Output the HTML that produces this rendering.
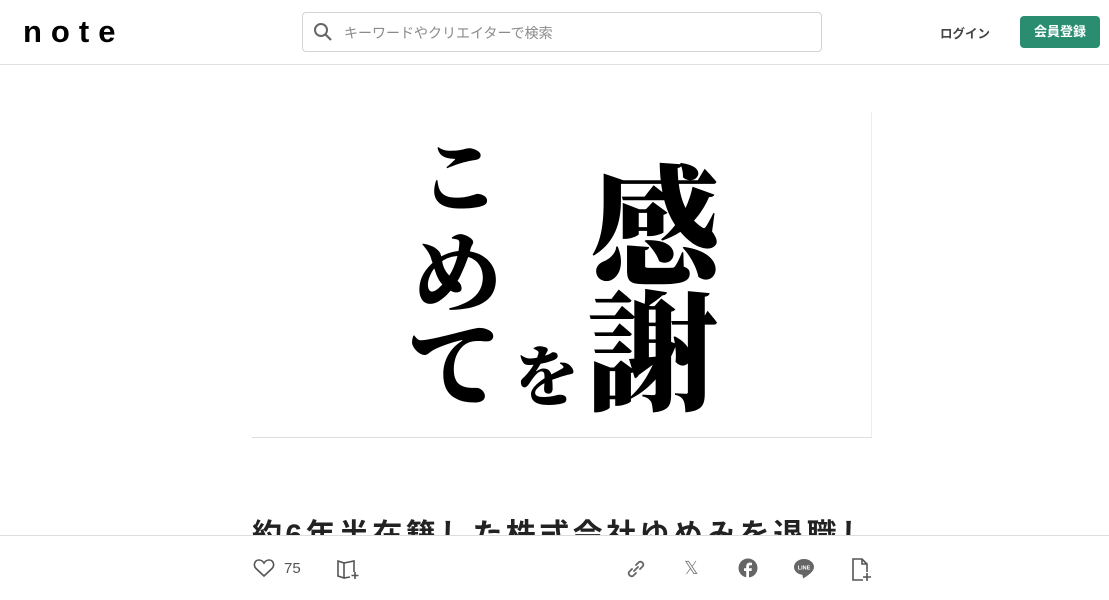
<!DOCTYPE html>
<html><head><meta charset="utf-8"><style>
*{margin:0;padding:0;box-sizing:border-box}
body{width:1109px;height:600px;overflow:hidden;background:#fff;font-family:"Liberation Sans","Noto Sans CJK JP",sans-serif;position:relative}
.hdr{position:absolute;top:0;left:0;width:1109px;height:65px;border-bottom:1px solid #e0e0e0}
.logo{position:absolute;left:23px;top:14px;font-size:31px;font-weight:bold;letter-spacing:9px;color:#000;font-family:"Liberation Sans",sans-serif}
.search{position:absolute;left:302px;top:12px;width:520px;height:40px;border:1px solid #d4d4d4;border-radius:4px}
.search span{position:absolute;left:41px;top:10px;font-size:14px;color:#8a8a8a}
.login{position:absolute;left:940px;top:23px;font-size:12.5px;font-weight:bold;color:#444}
.reg{position:absolute;left:1020px;top:16px;width:80px;height:32px;border-radius:4px;background:#2a8d70;color:#fff;font-size:13px;font-weight:bold;text-align:center;line-height:32px}
.img{position:absolute;left:252px;top:112px;width:620px;height:326px;border-bottom:1px solid #ddd;border-right:1px solid #eee;overflow:hidden}
.cal{position:absolute;font-family:"Noto Serif CJK JP","Noto Sans CJK JP",serif;font-weight:900;color:#000;line-height:1}
.title{position:absolute;left:252px;top:510px;font-size:30px;letter-spacing:3.4px;font-weight:bold;color:#222;white-space:nowrap;font-family:"Liberation Sans","Noto Sans CJK JP",sans-serif}
.bar{position:absolute;left:0;top:535px;width:1109px;height:65px;background:#fff;border-top:1px solid #ddd}
.ic{position:absolute;top:22px}
</style></head><body>
<div class="hdr">
<div class="logo">note</div>
<div class="search">
<svg style="position:absolute;left:10px;top:9px" width="20" height="20" viewBox="0 0 20 20"><circle cx="8" cy="8" r="6" fill="none" stroke="#666" stroke-width="2"/><path d="M12.5 12.5L18 18" stroke="#666" stroke-width="2.2"/></svg>
<span>キーワードやクリエイターで検索</span></div>
<div class="login">ログイン</div>
<div class="reg">会員登録</div>
</div>
<div class="img">
<div class="cal" style="left:168px;top:20px;font-size:80px">こ</div>
<div class="cal" style="left:160px;top:110px;font-size:90px">め</div>
<div class="cal" style="left:155px;top:200px;font-size:95px">て</div>
<div class="cal" style="left:262px;top:228px;font-size:65px">を</div>
<div class="cal" style="left:338px;top:42px;font-size:130px">感</div>
<div class="cal" style="left:335px;top:168px;font-size:130px">謝</div>
</div>
<div class="title">約6年半在籍した株式会社ゆめみを退職し、</div>
<div class="bar">
<svg class="ic" style="left:253px" width="22" height="20" viewBox="0 0 22 20"><path d="M11 18L3 10.5C0 7.5 1.5 2 6 2c2.3 0 4 1.5 5 3 1-1.5 2.7-3 5-3 4.5 0 6 5.5 3 8.5z" fill="none" stroke="#555" stroke-width="1.6"/></svg>
<div style="position:absolute;left:284px;top:24px;font-size:15px;color:#555">75</div>
<svg class="ic" style="left:336px" width="24" height="22" viewBox="0 0 24 22"><path d="M2 3l6 2v15l-6-2zM8 5l10-2v11M8 20l6-1" fill="none" stroke="#555" stroke-width="1.6"/><path d="M19 14v7M15.5 17.5h7" stroke="#555" stroke-width="1.6"/></svg>
<svg class="ic" style="left:625px" width="22" height="22" viewBox="0 0 22 22"><path d="M9 13l4-4M7 11l-3 3a3 3 0 004 4l3-3M15 11l3-3a3 3 0 00-4-4l-3 3" fill="none" stroke="#666" stroke-width="1.8" stroke-linecap="round"/></svg>
<div style="position:absolute;left:684px;top:22px;font-size:18px;color:#777">𝕏</div>
<svg class="ic" style="left:738px" width="20" height="20" viewBox="0 0 20 20"><circle cx="10" cy="10" r="9.5" fill="#666"/><path d="M11 20v-7h2.5l.4-2.8H11V8.6c0-.8.3-1.4 1.4-1.4H14V4.7c-.3 0-1.2-.1-2.2-.1-2.2 0-3.6 1.3-3.6 3.7v2H6V13h2.2v7z" fill="#fff"/></svg>
<svg class="ic" style="left:794px" width="20" height="21" viewBox="0 0 20 21"><path d="M10 1C4.5 1 0 4.6 0 9c0 4 3.6 7.3 8.5 7.9l.5 3.6C14 17.5 20 13.5 20 9c0-4.4-4.5-8-10-8z" fill="#666"/><text x="10" y="11.5" font-size="5.5" fill="#fff" text-anchor="middle" font-family="Liberation Sans" font-weight="bold">LINE</text></svg>
<svg class="ic" style="left:851px" width="22" height="24" viewBox="0 0 22 24"><path d="M12 22H2V1h9l5 5v8M11 1v5h5" fill="none" stroke="#555" stroke-width="1.6"/><path d="M16 15v8M12 19h8" stroke="#555" stroke-width="1.6"/></svg>
</div>
</body></html>
